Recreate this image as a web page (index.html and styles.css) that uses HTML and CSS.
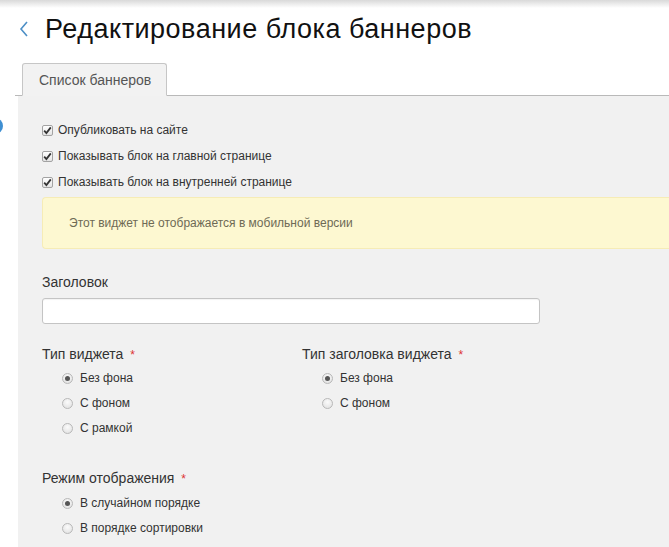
FILE: index.html
```html
<!DOCTYPE html>
<html lang="ru">
<head>
<meta charset="utf-8">
<title>Редактирование блока баннеров</title>
<link rel="stylesheet" href="styles.css">
</head>
<body>
<div class="topshadow"></div>
<div class="side-dot"></div>
<header class="header">
  <a class="back" href="#"><svg width="10" height="16" viewBox="0 0 10 16"><path d="M8 1 L2 8 L8 15" fill="none" stroke="#4d8fc6" stroke-width="1.6"/></svg></a>
  <h1 class="title">Редактирование блока баннеров</h1>
</header>
<div class="tabbar">
  <div class="tab">Список баннеров</div>
</div>
<main class="panel">
  <div class="checks">
    <label class="check"><span class="cb"><svg width="9" height="9" viewBox="0 0 9 9"><path d="M1.2 4.6 L3.4 7 L7.8 1.4" fill="none" stroke="#333" stroke-width="1.8"/></svg></span>Опубликовать на сайте</label>
    <label class="check"><span class="cb"><svg width="9" height="9" viewBox="0 0 9 9"><path d="M1.2 4.6 L3.4 7 L7.8 1.4" fill="none" stroke="#333" stroke-width="1.8"/></svg></span>Показывать блок на главной странице</label>
    <label class="check"><span class="cb"><svg width="9" height="9" viewBox="0 0 9 9"><path d="M1.2 4.6 L3.4 7 L7.8 1.4" fill="none" stroke="#333" stroke-width="1.8"/></svg></span>Показывать блок на внутренней странице</label>
  </div>
  <div class="alert">Этот виджет не отображается в мобильной версии</div>
  <div class="field">
    <div class="label">Заголовок</div>
    <div class="input"></div>
  </div>
  <div class="cols">
    <div class="group">
      <div class="label">Тип виджета <span class="req">*</span></div>
      <div class="radios">
        <div class="radio"><span class="rb on"></span>Без фона</div>
        <div class="radio"><span class="rb"></span>С фоном</div>
        <div class="radio"><span class="rb"></span>С рамкой</div>
      </div>
    </div>
    <div class="group">
      <div class="label">Тип заголовка виджета <span class="req">*</span></div>
      <div class="radios">
        <div class="radio"><span class="rb on"></span>Без фона</div>
        <div class="radio"><span class="rb"></span>С фоном</div>
      </div>
    </div>
  </div>
  <div class="group mode">
    <div class="label">Режим отображения <span class="req">*</span></div>
    <div class="radios">
      <div class="radio"><span class="rb on"></span>В случайном порядке</div>
      <div class="radio"><span class="rb"></span>В порядке сортировки</div>
    </div>
  </div>
</main>
</body>
</html>
```
FILE: styles.css
```css
* { box-sizing: border-box; }
html, body { margin: 0; padding: 0; }
body {
  background: #fff;
  font-family: "Liberation Sans", Arial, sans-serif;
  color: #333;
  width: 669px;
  height: 547px;
  overflow: hidden;
  position: relative;
}
.topshadow {
  height: 8px;
  background: linear-gradient(#d9d9d9, #fff);
}
.side-dot {
  position: absolute;
  left: -13px;
  top: 118px;
  width: 16px;
  height: 16px;
  border-radius: 50%;
  background: #3f8fd2;
}
.header {
  display: flex;
  align-items: center;
  height: 42px;
  padding-left: 19px;
}
.back { display: flex; width: 26px; }
.title {
  margin: 0;
  font-weight: normal;
  font-size: 27px;
  line-height: 30px;
  color: #111;
  letter-spacing: 0.5px;
}
.tabbar {
  margin-top: 13px;
  margin-left: 15px;
  padding-left: 7px;
  border-bottom: 1px solid #b9b9b9;
  display: flex;
}
.tab {
  height: 33px;
  margin-bottom: -1px;
  padding: 8px 15px 0 16px;
  background: #f2f2f2;
  border: 1px solid #c6c6c6;
  border-bottom: 1px solid #f2f2f2;
  border-radius: 3px 3px 0 0;
  font-size: 14px;
  color: #555;
}
.panel {
  margin-left: 18px;
  background: #f1f1f1;
  padding: 26px 0 40px 24px;
  height: 460px;
}
.checks { display: flex; flex-direction: column; gap: 10px; }
.check {
  display: flex;
  align-items: center;
  font-size: 12px;
  line-height: 16px;
  color: #333;
}
.cb {
  width: 11px;
  height: 11px;
  border: 1px solid #a3a3a3;
  border-radius: 2px;
  background: linear-gradient(#fff, #e4e4e4);
  margin-right: 5px;
  display: flex;
  align-items: center;
  justify-content: center;
}
.alert {
  margin-top: 7px;
  height: 52px;
  background: #fdf8d1;
  border: 1px solid #f6ecb6;
  border-right: none;
  border-radius: 4px 0 0 4px;
  padding: 0 0 0 26px;
  display: flex;
  align-items: center;
  font-size: 12px;
  color: #6e6a55;
}
.field { margin-top: 24px; }
.label {
  font-size: 14px;
  line-height: 18px;
  color: #333;
}
.req { color: #d33; font-size: 12px; margin-left: 3px; }
.input {
  margin-top: 7px;
  width: 498px;
  height: 26px;
  background: #fff;
  border: 1px solid #c4c4c4;
  border-radius: 3px;
  box-shadow: inset 0 1px 1px rgba(0,0,0,0.05);
}
.cols {
  margin-top: 21px;
  display: grid;
  grid-template-columns: 260px 260px;
}
.radios {
  margin-top: 6px;
  padding-left: 20px;
  display: flex;
  flex-direction: column;
  gap: 9px;
}
.radio {
  display: flex;
  align-items: center;
  font-size: 12px;
  line-height: 16px;
  color: #333;
}
.rb {
  width: 11px;
  height: 11px;
  border-radius: 50%;
  border: 1px solid #b8b8b8;
  background: radial-gradient(circle at 50% 35%, #fbfbfb, #dedede);
  margin-right: 7px;
  display: flex;
  align-items: center;
  justify-content: center;
}
.rb.on::after {
  content: "";
  width: 5px;
  height: 5px;
  border-radius: 50%;
  background: #555;
}
.mode { margin-top: 33px; }
.mode .radios { margin-top: 7px; }
```
